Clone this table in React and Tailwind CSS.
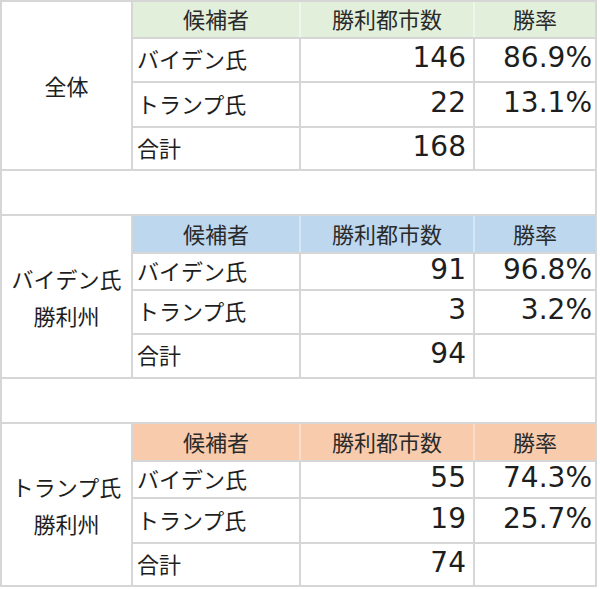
import React from "react";

const tables = [
  {
    label: ["全体"],
    head: "bg-[#e2efda]",
    line: "bg-[#eef5ea]",
    rows: [
      ["バイデン氏", "146", "86.9%"],
      ["トランプ氏", "22", "13.1%"],
      ["合計", "168", ""],
    ],
  },
  {
    label: ["バイデン氏", "勝利州"],
    head: "bg-[#bdd7ee]",
    line: "bg-[#d6e6f5]",
    rows: [
      ["バイデン氏", "91", "96.8%"],
      ["トランプ氏", "3", "3.2%"],
      ["合計", "94", ""],
    ],
  },
  {
    label: ["トランプ氏", "勝利州"],
    head: "bg-[#f8cbad]",
    line: "bg-[#fbddc9]",
    rows: [
      ["バイデン氏", "55", "74.3%"],
      ["トランプ氏", "19", "25.7%"],
      ["合計", "74", ""],
    ],
  },
];

const jp = "font-['Noto_Sans_CJK_JP',sans-serif]";
const num = "font-['DejaVu_Sans',sans-serif]";

const Block = ({ t }) => (
  <>
    <div className={`row-span-4 bg-white flex flex-col items-center justify-center text-[22px] leading-[37px] text-[#1e1e1e] ${jp}`}>
      {t.label.map((l) => (
        <div key={l}>{l}</div>
      ))}
    </div>
    <div className={`col-span-3 grid grid-cols-[166px_172px_120px] gap-[2px] ${t.line}`}>
      <div className={`${t.head} flex items-center justify-center pb-[3px] leading-none text-[22px] text-[#2a2a2a] ${jp}`}>候補者</div>
      <div className={`${t.head} flex items-center justify-center pb-[3px] leading-none text-[22px] text-[#2a2a2a] ${jp}`}>勝利都市数</div>
      <div className={`${t.head} flex items-center justify-center pb-[3px] leading-none text-[22px] text-[#2a2a2a] ${jp}`}>勝率</div>
    </div>
    {t.rows.map((r) => (
      <React.Fragment key={r[0]}>
        <div className={`bg-white flex items-center pl-[4px] pb-[4px] leading-none text-[22px] text-[#1e1e1e] ${jp}`}>{r[0]}</div>
        <div className={`bg-white flex items-center justify-end pr-[7px] pb-[4px] leading-none text-[28px] text-[#1e1e1e] ${num}`}>{r[1]}</div>
        <div className={`bg-white flex items-center justify-end pr-[3px] pb-[4px] leading-none text-[28px] text-[#1e1e1e] ${num}`}>{r[2]}</div>
      </React.Fragment>
    ))}
  </>
);

export default function App() {
  return (
    <div className="w-[600px] h-[589px] bg-white overflow-hidden">
      <div className="grid w-fit grid-cols-[129px_166px_172px_120px] grid-rows-[35px_42px_43px_41px_43px_36px_35px_42px_42px_43px_36px_35px_43px_41px] gap-[2px] p-[2px] bg-[#d6d6d6]">
        <Block t={tables[0]} />
        <div className="col-span-4 bg-white" />
        <Block t={tables[1]} />
        <div className="col-span-4 bg-white" />
        <Block t={tables[2]} />
      </div>
    </div>
  );
}
